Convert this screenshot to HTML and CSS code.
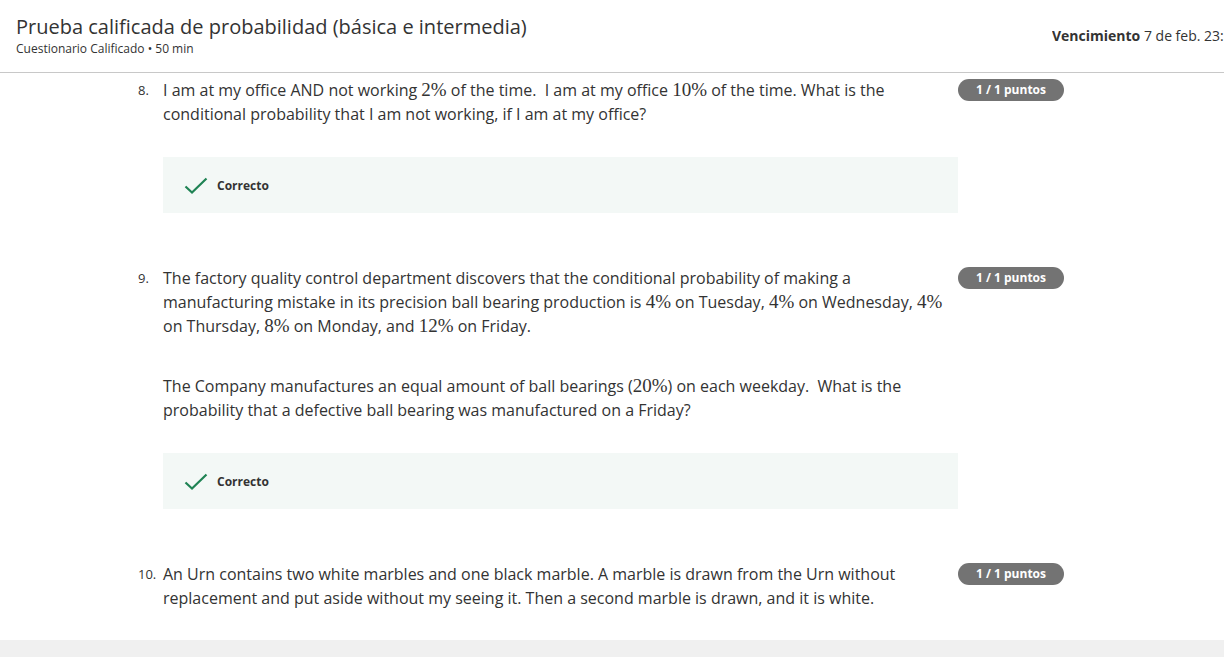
FILE: index.html
```html
<!DOCTYPE html>
<html lang="es">
<head>
<meta charset="utf-8">
<title>Prueba calificada de probabilidad</title>
<link rel="stylesheet" href="styles.css">
</head>
<body>
<header class="header">
  <div class="title-block">
    <h1 class="title">Prueba calificada de probabilidad (básica e intermedia)</h1>
    <div class="subtitle">Cuestionario Calificado • 50 min</div>
  </div>
  <div class="due"><strong>Vencimiento</strong> 7 de feb. 23:59 CST</div>
</header>

<main class="questions">
  <section class="question">
    <div class="num">8.</div>
    <div class="body">
      <p class="para">I am at my office AND not working <span class="m">2%</span> of the time.&nbsp; I am at my office <span class="m">10%</span> of the time. What is the conditional probability that I am not working, if I am at my office?</p>
      <div class="feedback">
        <svg class="check" width="24" height="18" viewBox="0 0 24 18"><path d="M1.5 9.5 L8 15.5 L22.5 1.5" fill="none" stroke="#1f8354" stroke-width="2.2"/></svg>
        <span class="fb-text">Correcto</span>
      </div>
    </div>
    <div class="badge">1 / 1 puntos</div>
  </section>

  <section class="question">
    <div class="num">9.</div>
    <div class="body">
      <p class="para">The factory quality control department discovers that the conditional probability of making a manufacturing mistake in its precision ball bearing production is <span class="m">4%</span> on Tuesday, <span class="m">4%</span> on Wednesday, <span class="m">4%</span> on Thursday, <span class="m">8%</span> on Monday, and <span class="m">12%</span> on Friday.</p>
      <p class="para para-2">The Company manufactures an equal amount of ball bearings (<span class="m">20%</span>) on each weekday.&nbsp; What is the probability that a defective ball bearing was manufactured on a Friday?</p>
      <div class="feedback">
        <svg class="check" width="24" height="18" viewBox="0 0 24 18"><path d="M1.5 9.5 L8 15.5 L22.5 1.5" fill="none" stroke="#1f8354" stroke-width="2.2"/></svg>
        <span class="fb-text">Correcto</span>
      </div>
    </div>
    <div class="badge">1 / 1 puntos</div>
  </section>

  <section class="question last">
    <div class="num">10.</div>
    <div class="body">
      <p class="para">An Urn contains two white marbles and one black marble. A marble is drawn from the Urn without replacement and put aside without my seeing it. Then a second marble is drawn, and it is white.</p>
    </div>
    <div class="badge">1 / 1 puntos</div>
  </section>
</main>
<footer class="footer"></footer>
</body>
</html>
```

FILE: styles.css
```css
* { box-sizing: border-box; }
html, body { margin: 0; padding: 0; }
body {
  font-family: "Open Sans", "Liberation Sans", Arial, sans-serif;
  color: #333;
  background: #fff;
  overflow: hidden;
}
.header {
  height: 73px;
  border-bottom: 1px solid #c8c8c8;
  display: flex;
  justify-content: space-between;
  align-items: flex-start;
  padding-left: 16px;
}
.title-block { padding-top: 13px; }
.title {
  margin: 0;
  font-size: 20px;
  font-weight: 400;
  line-height: 28px;
  color: #333;
}
.subtitle {
  font-size: 12px;
  line-height: 16px;
  color: #333;
}
.due {
  flex: 0 0 172px;
  width: 172px;
  white-space: nowrap;
  overflow: hidden;
  font-size: 14px;
  line-height: 20px;
  padding-top: 26px;
  color: #333;
}
.due strong { font-weight: 700; }
.questions {
  padding: 5px 0 0 136px;
}
.question {
  display: flex;
  align-items: flex-start;
  margin-bottom: 53px;
}
.question.last { margin-bottom: 30px; }
.num {
  width: 27px;
  flex: 0 0 27px;
  font-size: 13px;
  line-height: 24px;
  padding-left: 2px;
}
.body {
  width: 795px;
  flex: 0 0 795px;
}
.para {
  margin: 0;
  font-size: 16px;
  line-height: 24px;
  width: 790px;
}
.para-2 { margin-top: 36px; }
.m {
  font-family: "Liberation Serif", "Times New Roman", serif;
  font-size: 19px;
  line-height: 1;
}
.feedback {
  margin-top: 31px;
  height: 56px;
  background: #f3f8f6;
  display: flex;
  align-items: center;
  padding-left: 21px;
}
.check { margin-right: 9px; margin-top: 1px; }
.fb-text {
  font-size: 12px;
  font-weight: 700;
  color: #333;
}
.badge {
  margin-top: 1px;
  width: 106px;
  height: 22px;
  border-radius: 11px;
  background: #737373;
  color: #fff;
  font-size: 12px;
  font-weight: 700;
  line-height: 22px;
  text-align: center;
}
.footer {
  height: 17px;
  background: #f0f0f0;
}
```
